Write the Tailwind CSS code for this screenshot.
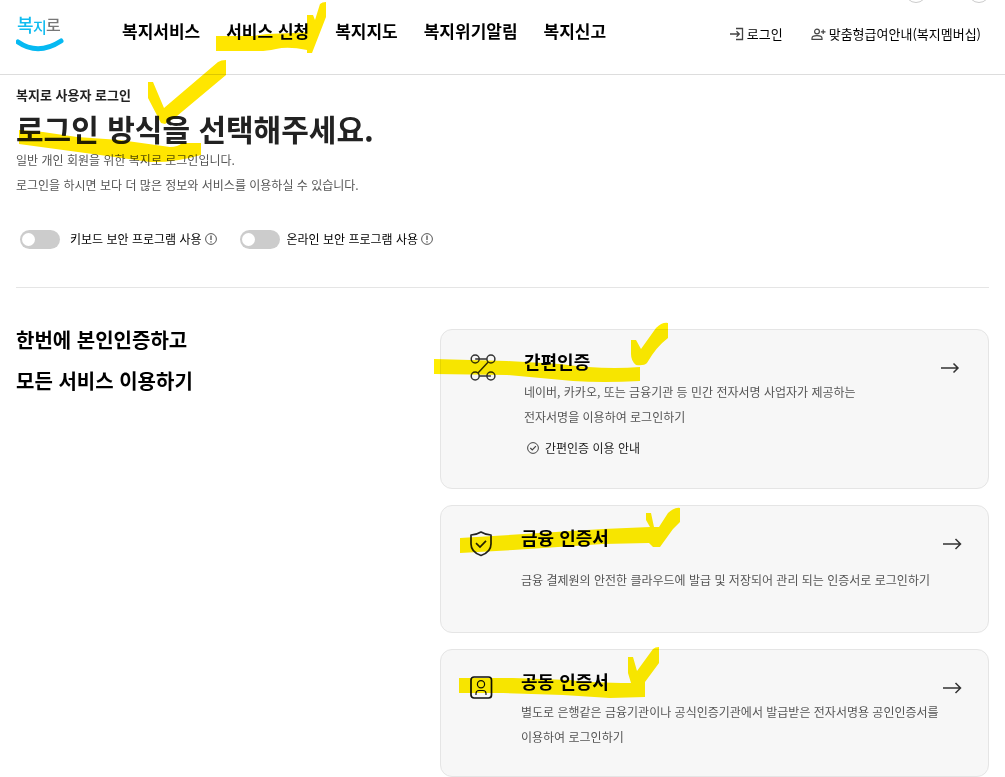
<!DOCTYPE html>
<html lang="ko">
<head>
  <meta charset="UTF-8" />
  <meta name="viewport" content="width=device-width, initial-scale=1.0" />
  <title>복지로 로그인</title>
  <script src="https://cdn.jsdelivr.net/npm/@tailwindcss/browser@4"></script>
</head>
<body class="bg-white text-[#222] font-['Noto_Sans_CJK_KR',sans-serif] overflow-x-hidden">
  <header class="relative flex items-center h-[75px] pl-4 pr-6 pb-3 border-b border-[#ddd]">
    <a href="#" class="mr-[58px]">
      <svg class="w-12 h-11" viewBox="0 0 48 44" role="img" aria-label="복지로">
        <g font-family="'Noto Sans CJK KR', sans-serif" font-weight="500">
          <text x="1" y="23" font-size="18" fill="#10bcf0">복</text>
          <text x="17" y="24" font-size="15" fill="#10bcf0">지</text>
          <text x="30" y="22" font-size="16" fill="#777">로</text>
        </g>
        <path d="M2 33 Q22 47 45 32" fill="none" stroke="#06b9f2" stroke-width="5" stroke-linecap="round" />
      </svg>
    </a>
    <nav class="flex gap-[26px] text-[17px] leading-6 font-bold text-black whitespace-nowrap">
      <a href="#">복지서비스</a>
      <a href="#">서비스 신청</a>
      <a href="#">복지지도</a>
      <a href="#">복지위기알림</a>
      <a href="#">복지신고</a>
    </nav>
    <div class="flex gap-7 ml-auto pt-1.5 text-[13px] leading-5 whitespace-nowrap text-black">
      <a href="#" class="flex items-center gap-[3px]">
        <svg class="w-3.5 h-3.5" viewBox="0 0 14 14" fill="none" stroke="#444" stroke-width="1.3">
          <path d="M6 1.5h6.5v11H6M0 7h9M6.5 4.2L9.3 7 6.5 9.8" />
        </svg>
        로그인
      </a>
      <a href="#" class="flex items-center gap-[3px]">
        <svg class="w-[15px] h-3.5" viewBox="0 0 15 14" fill="none" stroke="#444" stroke-width="1.2">
          <circle cx="6" cy="4.5" r="2.4" />
          <path d="M1 12.4v-1.2C1 9.4 3.2 8.7 6 8.7s5 .7 5 2.5v1.2zM12.2 2.5v4.6M9.9 4.8h4.6" />
        </svg>
        맞춤형급여안내(복지멤버십)
      </a>
    </div>
    <span class="absolute right-[78px] -top-[19px] size-[22px] rounded-full border border-[#ccc]"></span>
    <span class="absolute right-[15px] -top-[19px] size-[22px] rounded-full border border-[#ccc]"></span>
    <!-- 형광펜 표시 -->
    <svg class="absolute left-[216px] top-0 w-28 h-14 mix-blend-multiply pointer-events-none" viewBox="0 0 112 56" fill="#ffe600">
      <path d="M0 36H37L51 34 77 33 91 32V15H97L99 20 104 4Q106 2 110 2V17L96 53H91V50Q72 46 60 49 50 51 44 51H0Z" />
    </svg>
  </header>

  <main class="px-4">
    <section class="relative pt-2.5 pb-[38px] border-b border-[#e5e5e5]">
      <p class="text-[13px] leading-5 font-bold">복지로 사용자 로그인</p>
      <h1 class="mt-[3px] text-[30px] leading-10 font-bold">로그인 방식을 선택해주세요.</h1>
      <p class="-mt-px text-xs leading-[25px] text-[#555]">
        일반 개인 회원을 위한 복지로 로그인입니다.<br />
        로그인을 하시면 보다 더 많은 정보와 서비스를 이용하실 수 있습니다.
      </p>
      <div class="flex items-center gap-[23px] mt-8 pl-1 text-xs leading-5 text-black">
        <div class="flex items-center">
          <input type="checkbox" id="keyboard" class="appearance-none w-10 h-[19px] rounded-full bg-[#ccc] checked:bg-sky-500 before:block before:size-[13px] before:mx-0.5 before:my-[3px] before:rounded-full before:bg-white checked:before:ml-6" />
          <label for="keyboard" class="ml-2.5">키보드 보안 프로그램 사용</label>
          <button type="button" aria-label="키보드 보안 안내" class="ml-[3px]">
            <svg class="size-3" viewBox="0 0 12 12" fill="none" stroke="#444"><circle cx="6" cy="6" r="5.4" stroke-width=".9" /><path d="M6 2.5v4.6M6 8.2v1.3" stroke-width="1.2" /></svg>
          </button>
        </div>
        <div class="flex items-center">
          <input type="checkbox" id="online" class="appearance-none w-10 h-[19px] rounded-full bg-[#ccc] checked:bg-sky-500 before:block before:size-[13px] before:mx-0.5 before:my-[3px] before:rounded-full before:bg-white checked:before:ml-6" />
          <label for="online" class="ml-[7px]">온라인 보안 프로그램 사용</label>
          <button type="button" aria-label="온라인 보안 안내" class="ml-[3px]">
            <svg class="size-3" viewBox="0 0 12 12" fill="none" stroke="#444"><circle cx="6" cy="6" r="5.4" stroke-width=".9" /><path d="M6 2.5v4.6M6 8.2v1.3" stroke-width="1.2" /></svg>
          </button>
        </div>
      </div>
      <svg class="absolute left-0 -top-4 w-[212px] h-28 mix-blend-multiply pointer-events-none" viewBox="0 0 212 112" fill="#ffe600">
        <path d="M132 23H137L148 49 202 3Q205 1 210 1V16L161 57 149 65 145 64 132 39Z" />
        <path d="M3 71L27 73 61 78 104 81 154 88Q162 88 166 84H185V96Q157 104 134 103L84 96 3 85Z" />
      </svg>
    </section>

    <section class="grid grid-cols-[424px_1fr] pt-[41px]">
      <h2 class="-mt-2.5 text-xl leading-[41px] font-bold text-black">한번에 본인인증하고<br />모든 서비스 이용하기</h2>

      <div class="flex flex-col gap-4">
        <article class="relative flex items-start gap-[27px] pt-[19px] pb-7 pl-7 pr-7 border border-[#e5e5e5] rounded-xl bg-[#f7f7f7]">
          <svg class="shrink-0 mt-[5px] size-7" viewBox="0 0 28 28" fill="none" stroke="#333" stroke-width="1.5">
            <circle cx="6.2" cy="5" r="4" /><circle cx="21.9" cy="5" r="4" />
            <circle cx="6.2" cy="22" r="4" /><circle cx="21.9" cy="22" r="4" />
            <path d="M6.2 5h11.7M19.2 8L9 19M10.2 22h11.7" />
          </svg>
          <div class="flex-1">
            <h3 class="text-lg leading-6 font-bold text-black">간편인증</h3>
            <p class="mt-1.5 text-xs leading-[25px] text-[#555]">네이버, 카카오, 또는 금융기관 등 민간 전자서명 사업자가 제공하는<br />전자서명을 이용하여 로그인하기</p>
            <button type="button" class="flex items-center gap-1.5 mt-[7px] pl-[3px] text-xs leading-6">
              <svg class="size-3" viewBox="0 0 12 12" fill="none" stroke="#444"><circle cx="6" cy="6" r="5.4" /><path d="M3.3 6l2 2 3.6-3.8" stroke-width="1.2" /></svg>
              간편인증 이용 안내
            </button>
          </div>
          <a href="#" aria-label="간편인증 로그인" class="mt-[13px]">
            <svg class="w-[19px] h-3" viewBox="0 0 19 12" fill="none" stroke="#333" stroke-width="1.5"><path d="M0 6h17M12.5 1.5l4.5 4.5-4.5 4.5" /></svg>
          </a>
          <svg class="absolute left-0 top-0 w-60 h-14 overflow-visible mix-blend-multiply pointer-events-none" viewBox="0 0 240 56" fill="#ffed00">
            <path d="M-7 29L66 31 119 34Q162 40 199 37V51Q162 53 132 51L66 45-7 44Z" />
            <path d="M190 10H195L200 19 215-2Q221-8 227-7V8Q215 17 206 33 203 36 195 35 190 31 190 24Z" />
          </svg>
        </article>

        <article class="relative flex items-start gap-6 pt-[19px] pb-10 pl-7 pr-[26px] border border-[#e5e5e5] rounded-xl bg-[#f7f7f7]">
          <svg class="shrink-0 mt-[5px] size-7" viewBox="0 0 28 28" fill="none" stroke="#222" stroke-width="1.7">
            <path d="M12 2Q17 5 22 5V14Q22 22 12 25.5 2 22 2 14V5Q7 5 12 2Z" stroke-linejoin="round" />
            <path d="M7 13.2l4 3.8 6-6.2" />
          </svg>
          <div class="flex-1">
            <h3 class="text-lg leading-6 font-bold text-black">금융 인증서</h3>
            <p class="mt-[18px] text-xs leading-[25px] text-[#555]">금융 결제원의 안전한 클라우드에 발급 및 저장되어 관리 되는 인증서로 로그인하기</p>
          </div>
          <a href="#" aria-label="금융 인증서 로그인" class="mt-[13px] -ml-6">
            <svg class="w-[19px] h-3" viewBox="0 0 19 12" fill="none" stroke="#333" stroke-width="1.5"><path d="M0 6h17.5M12.5 1l5 5-5 5" /></svg>
          </a>
          <svg class="absolute left-0 top-0 w-60 h-14 overflow-visible mix-blend-multiply pointer-events-none" viewBox="0 0 240 56" fill="#ffed00">
            <path d="M19 32L52 30 162 23 209 21 205 14V7H210L213 21H218L227 7Q234 1 239 2V16L232 23 219 41H212L208 37 162 38 72 44 19 47Z" />
          </svg>
        </article>

        <article class="relative flex items-start gap-6 pt-[19px] pb-[27px] pl-7 pr-[26px] border border-[#e5e5e5] rounded-xl bg-[#f7f7f7]">
          <svg class="shrink-0 mt-[5px] size-7" viewBox="0 0 28 28" fill="none" stroke="#111" stroke-width="1.7">
            <rect x="2" y="3" width="20.5" height="21" rx="3" />
            <circle cx="12" cy="10.2" r="3.6" stroke-width="1.2" />
            <path d="M7 21v-1.5Q7 16.5 10 16.5h4Q17 16.5 17 19.5V21" stroke-width="1.2" />
          </svg>
          <div class="flex-1">
            <h3 class="text-lg leading-6 font-bold text-black">공동 인증서</h3>
            <p class="mt-1.5 text-xs leading-[25px] text-[#555]">별도로 은행같은 금융기관이나 공식인증기관에서 발급받은 전자서명용 공인인증서를<br />이용하여 로그인하기</p>
          </div>
          <a href="#" aria-label="공동 인증서 로그인" class="mt-[13px] -ml-6">
            <svg class="w-[19px] h-3" viewBox="0 0 19 12" fill="none" stroke="#333" stroke-width="1.5"><path d="M0 6h17.5M12.5 1l5 5-5 5" /></svg>
          </a>
          <svg class="absolute left-0 top-0 w-60 h-14 overflow-visible mix-blend-multiply pointer-events-none" viewBox="0 0 240 56" fill="#ffed00">
            <path d="M18 28H72L129 30Q150 33 190 33L187 23V7H192L196 21 212-1Q214-3 218-3V13L204 32V47L169 48 122 45 62 43H18Z" />
          </svg>
        </article>
      </div>
    </section>
  </main>
</body>
</html>
